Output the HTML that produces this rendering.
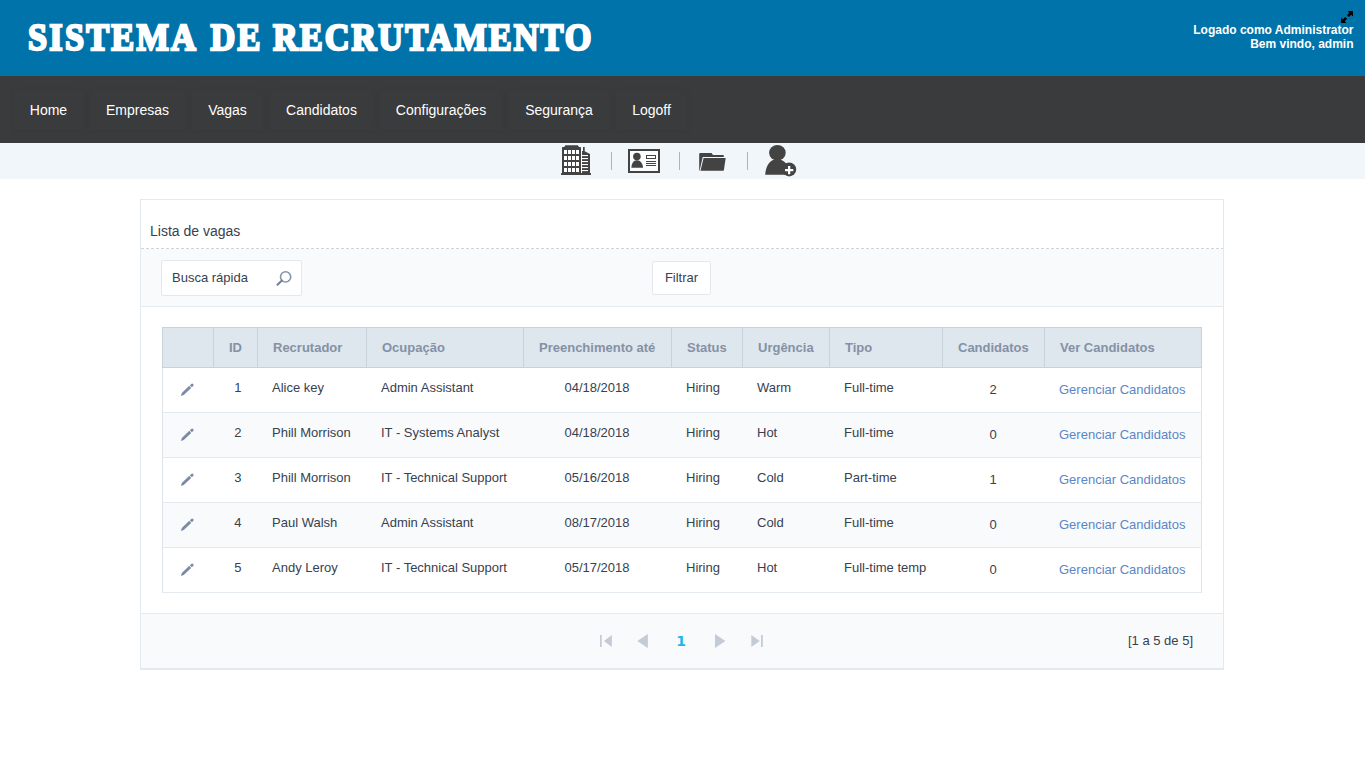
<!DOCTYPE html>
<html lang="pt-br">
<head>
<meta charset="utf-8">
<title>Sistema de Recrutamento</title>
<style>
*{box-sizing:border-box;}
html,body{margin:0;padding:0;}
body{width:1365px;height:767px;overflow:hidden;background:#fff;font-family:"Liberation Sans",Arial,sans-serif;font-size:13px;color:#37414f;position:relative;}
#header{position:absolute;left:0;top:0;width:1365px;height:76px;background:#0073aa;}
#title{position:absolute;left:28px;top:12.4px;margin:0;font-family:"Liberation Serif",serif;font-weight:bold;font-size:38.5px;line-height:50px;color:#fff;white-space:nowrap;letter-spacing:2.5px;word-spacing:4px;transform-origin:0 50%;transform:scaleX(0.891);-webkit-text-stroke:2.4px #fff;}
#user{position:absolute;right:11.5px;top:23px;text-align:right;color:#fff;font-weight:bold;font-size:12px;line-height:14px;}
#expand{position:absolute;left:1341px;top:11px;width:12px;height:12px;}
#nav{position:absolute;left:0;top:76px;width:1365px;height:67px;background:#3a3b3d;}
#nav a{position:absolute;top:14px;height:40px;line-height:40px;color:#fff;font-size:14px;text-decoration:none;text-align:center;box-shadow:0 1px 6px rgba(0,0,0,.06);}
#toolbar{position:absolute;left:0;top:143px;width:1365px;height:36px;background:#f1f6fb;}
.sep{position:absolute;top:9px;width:1px;height:18px;background:#b0b3b6;}
#panel{position:absolute;left:140px;top:199px;width:1084px;height:471px;border:1px solid #e4e9ed;border-bottom:2px solid #e4e9ed;background:#fff;}
#ptitle{position:absolute;left:9px;top:22px;font-size:14px;line-height:18px;color:#37414f;}
#filter{position:absolute;left:0;top:48px;width:1082px;height:59px;background:#f9fafc;border-top:1px solid #fff;border-bottom:1px solid #e4e9ed;}
#filter:before{content:"";position:absolute;left:0;top:-1px;width:1082px;height:1px;background:repeating-linear-gradient(90deg,#cdd4db 0,#cdd4db 3px,transparent 3px,transparent 5px);}
#search{position:absolute;left:20px;top:11px;width:141px;height:36px;border:1px solid #e3e8ec;border-radius:2px;background:#fff;line-height:34px;padding-left:10px;font-size:13px;color:#37414f;}
#filtrar{position:absolute;left:511px;top:12px;width:59px;height:34px;border:1px solid #e3e8ec;border-radius:2px;background:#fff;line-height:32px;text-align:center;font-size:13px;color:#37414f;}
table{position:absolute;left:21px;top:127px;border-collapse:collapse;width:1039px;table-layout:fixed;}
th{height:40px;background:#dee6ee;border:1px solid #c7d2dc;color:#8591a5;font-weight:bold;font-size:13px;text-align:left;padding:0 0 0 15px;}
td{height:45px;border-top:1px solid #e4e9ed;border-bottom:1px solid #e4e9ed;font-size:13px;color:#37414f;padding:0 0 5px 14.5px;}
tr.e td{background:#f9fafc;}
td.p{padding:0 0 1px 16px;}
td.p svg{display:block;width:16px;height:16px;}
td.id{text-align:center;padding-left:4.5px;}
table{border:1px solid #dde3e8;}
td.c,th.c{text-align:center;padding-left:0;}
td.c{padding-right:1px;}
td.lnk{color:#5b86c5;padding-bottom:1px;}
td.n{padding-bottom:1px;}
#footer{position:absolute;left:0;top:413px;width:1082px;height:55px;background:#f9fafc;border-top:1px solid #e4e9ed;}
#count{position:absolute;right:30px;top:19px;font-size:13px;color:#37414f;}
#pg1{position:absolute;left:530px;top:18px;width:20px;text-align:center;font-family:"DejaVu Sans","Liberation Sans",sans-serif;font-weight:bold;font-size:14px;line-height:18px;color:#1bb6ee;}
</style>
</head>
<body>
<div id="header">
  <h1 id="title">SISTEMA DE <span style="margin-left:-4.5px;letter-spacing:2.3px">RECRUTAMENTO</span></h1>
  <svg id="expand" viewBox="0 0 12 12"><path d="M6.500 0H12v5.500l-1.800-1.800-2.400 2.400-1.900-1.900 2.400-2.400zM5.500 12H0V6.500l1.800 1.800 2.400-2.400 1.900 1.900-2.400 2.400z" fill="#000"/></svg>
  <div id="user">Logado como Administrator<br>Bem vindo, admin</div>
</div>
<div id="nav">
  <a style="left:14px;width:69px">Home</a>
  <a style="left:90px;width:95px">Empresas</a>
  <a style="left:192px;width:71px">Vagas</a>
  <a style="left:270px;width:103px">Candidatos</a>
  <a style="left:380px;width:122px">Configurações</a>
  <a style="left:509px;width:100px">Segurança</a>
  <a style="left:616px;width:71px">Logoff</a>
</div>
<div id="toolbar">
<svg id="icons" viewBox="0 143 1365 36" width="1365" height="36" style="position:absolute;left:0;top:0">
<g fill="#434343">
<path d="M565.4 145.2h12.4l1.2 1.8h1.2a0.8 0.8 0 0 1 .8 .8V173h-19V147.8a.8 .8 0 0 1 .8-.8h1.4z"/>
<path d="M582 173V151h1v-4h1.7v4.2L590 154v19z"/>
<rect x="561" y="173" width="30" height="2" rx=".5"/>
</g>
<g fill="#fff"><rect x="564" y="150" width="3" height="4"/><rect x="564" y="156" width="3" height="4"/><rect x="564" y="162" width="3" height="4"/><rect x="564" y="168" width="3" height="4"/><rect x="568" y="150" width="3" height="4"/><rect x="568" y="156" width="3" height="4"/><rect x="568" y="162" width="3" height="4"/><rect x="568" y="168" width="3" height="4"/><rect x="572" y="150" width="3" height="4"/><rect x="572" y="156" width="3" height="4"/><rect x="572" y="162" width="3" height="4"/><rect x="572" y="168" width="3" height="4"/><rect x="576" y="150" width="3" height="4"/><rect x="576" y="156" width="3" height="4"/><rect x="576" y="162" width="3" height="4"/><rect x="576" y="168" width="3" height="4"/><rect x="581" y="150" width="1" height="23"/><rect x="582" y="155" width="6" height="1.1"/><rect x="582" y="158" width="6" height="1.1"/><rect x="582" y="161" width="6" height="1.1"/><rect x="582" y="164" width="6" height="1.1"/><rect x="582" y="167" width="6" height="1.1"/><rect x="582" y="170" width="6" height="1.1"/></g>
<rect x="629" y="150" width="30" height="22" fill="#fbfdfe" stroke="#434343" stroke-width="2"/>
<g fill="#434343">
<circle cx="636.9" cy="156.6" r="3.8"/>
<path d="M631.4 167.8c0-4 2-7.6 5.5-7.6s6.100 3.600 6.100 7.600z"/>
<rect x="646" y="161" width="10" height="1"/><rect x="646" y="163" width="10" height="1"/><rect x="646" y="165" width="10" height="1"/>
</g>
<rect x="646.500" y="155.500" width="9" height="3" fill="#fff" stroke="#434343" stroke-width="1"/>
<g fill="#434343">
<path d="M699.200 154a1 1 0 0 1 1-1h11.300l1.500 2h10.200a.6 .6 0 0 1 .6 .6v1.400h-21.100l-3.100 13.700h-.4z"/>
<path d="M703.600 158.100h22.100l-1.800 12a.7 .7 0 0 1-.7 .6h-22.700z"/>
<ellipse cx="777.400" cy="152.700" rx="8.300" ry="7.700"/>
<path d="M765.200 174.700c.3-7 3.500-13 8-14.700h8.200c4 1.500 6 5 8 9v5.700z"/>
<circle cx="789.200" cy="169.400" r="7"/>
</g>
<path d="M785 170.100h8.300M789.150 166v8.200" stroke="#fff" stroke-width="2.200" fill="none"/>
</svg>
  <div class="sep" style="left:611px"></div>
  <div class="sep" style="left:679px"></div>
  <div class="sep" style="left:747px"></div>
</div>
<div id="panel">
  <div id="ptitle">Lista de vagas</div>
  <div id="filter">
    <div id="search">Busca rápida<svg viewBox="0 0 16 16" style="position:absolute;left:113.500px;top:9px;width:16px;height:16px"><circle cx="9.600" cy="6.900" r="5.100" fill="none" stroke="#8493aa" stroke-width="1.600"/><path d="M5.900 10.500L1.500 14.700" stroke="#6f7f97" stroke-width="2" stroke-linecap="round"/></svg></div>
    <div id="filtrar">Filtrar</div>
  </div>
  <table>
    <colgroup><col style="width:51px"><col style="width:44px"><col style="width:109px"><col style="width:157px"><col style="width:148px"><col style="width:71px"><col style="width:87px"><col style="width:113px"><col style="width:102px"><col style="width:157px"></colgroup>
    <tr><th></th><th class="c">ID</th><th>Recrutador</th><th>Ocupação</th><th>Preenchimento até</th><th>Status</th><th>Urgência</th><th>Tipo</th><th>Candidatos</th><th>Ver Candidatos</th></tr>
    <tr><td class="p"><svg viewBox="-8 -8 16 16"><g transform="rotate(-44)" fill="#7b8ba6"><path d="M-8.500 0l2.600-1.400h10.400v2.800h-10.400z"/><path d="M5.300-1.400h2a1.300 1.400 0 0 1 0 2.800h-2z"/></g></svg></td><td class="id">1</td><td>Alice key</td><td>Admin Assistant</td><td class="c">04/18/2018</td><td>Hiring</td><td>Warm</td><td>Full-time</td><td class="c n">2</td><td class="lnk">Gerenciar Candidatos</td></tr>
    <tr class="e"><td class="p"><svg viewBox="-8 -8 16 16"><g transform="rotate(-44)" fill="#7b8ba6"><path d="M-8.500 0l2.600-1.400h10.400v2.800h-10.400z"/><path d="M5.300-1.400h2a1.300 1.400 0 0 1 0 2.800h-2z"/></g></svg></td><td class="id">2</td><td>Phill Morrison</td><td>IT - Systems Analyst</td><td class="c">04/18/2018</td><td>Hiring</td><td>Hot</td><td>Full-time</td><td class="c n">0</td><td class="lnk">Gerenciar Candidatos</td></tr>
    <tr><td class="p"><svg viewBox="-8 -8 16 16"><g transform="rotate(-44)" fill="#7b8ba6"><path d="M-8.500 0l2.600-1.400h10.400v2.800h-10.400z"/><path d="M5.300-1.400h2a1.300 1.400 0 0 1 0 2.800h-2z"/></g></svg></td><td class="id">3</td><td>Phill Morrison</td><td>IT - Technical Support</td><td class="c">05/16/2018</td><td>Hiring</td><td>Cold</td><td>Part-time</td><td class="c n">1</td><td class="lnk">Gerenciar Candidatos</td></tr>
    <tr class="e"><td class="p"><svg viewBox="-8 -8 16 16"><g transform="rotate(-44)" fill="#7b8ba6"><path d="M-8.500 0l2.600-1.400h10.400v2.800h-10.400z"/><path d="M5.300-1.400h2a1.300 1.400 0 0 1 0 2.800h-2z"/></g></svg></td><td class="id">4</td><td>Paul Walsh</td><td>Admin Assistant</td><td class="c">08/17/2018</td><td>Hiring</td><td>Cold</td><td>Full-time</td><td class="c n">0</td><td class="lnk">Gerenciar Candidatos</td></tr>
    <tr><td class="p"><svg viewBox="-8 -8 16 16"><g transform="rotate(-44)" fill="#7b8ba6"><path d="M-8.500 0l2.600-1.400h10.400v2.800h-10.400z"/><path d="M5.300-1.400h2a1.300 1.400 0 0 1 0 2.800h-2z"/></g></svg></td><td class="id">5</td><td>Andy Leroy</td><td>IT - Technical Support</td><td class="c">05/17/2018</td><td>Hiring</td><td>Hot</td><td>Full-time temp</td><td class="c n">0</td><td class="lnk">Gerenciar Candidatos</td></tr>
  </table>
  <div id="footer">
<svg viewBox="0 613 1082 55" width="1082" height="55" style="position:absolute;left:0;top:0"><g fill="#c3cbd6" transform="translate(-141 -1)">
<rect x="600" y="635" width="1.700" height="12"/><path d="M603.900 641l8-6v12z"/>
<path d="M637.300 641l10.600-7v14z"/>
<path d="M725.400 641l-10.400-7v14z"/>
<path d="M759.800 641l-8.500-6v12z"/><rect x="761" y="635" width="1.800" height="12"/>
</g></svg>
    <div id="pg1">1</div>
    <div id="count">[1 a 5 de 5]</div>
  </div>
</div>
</body>
</html>
